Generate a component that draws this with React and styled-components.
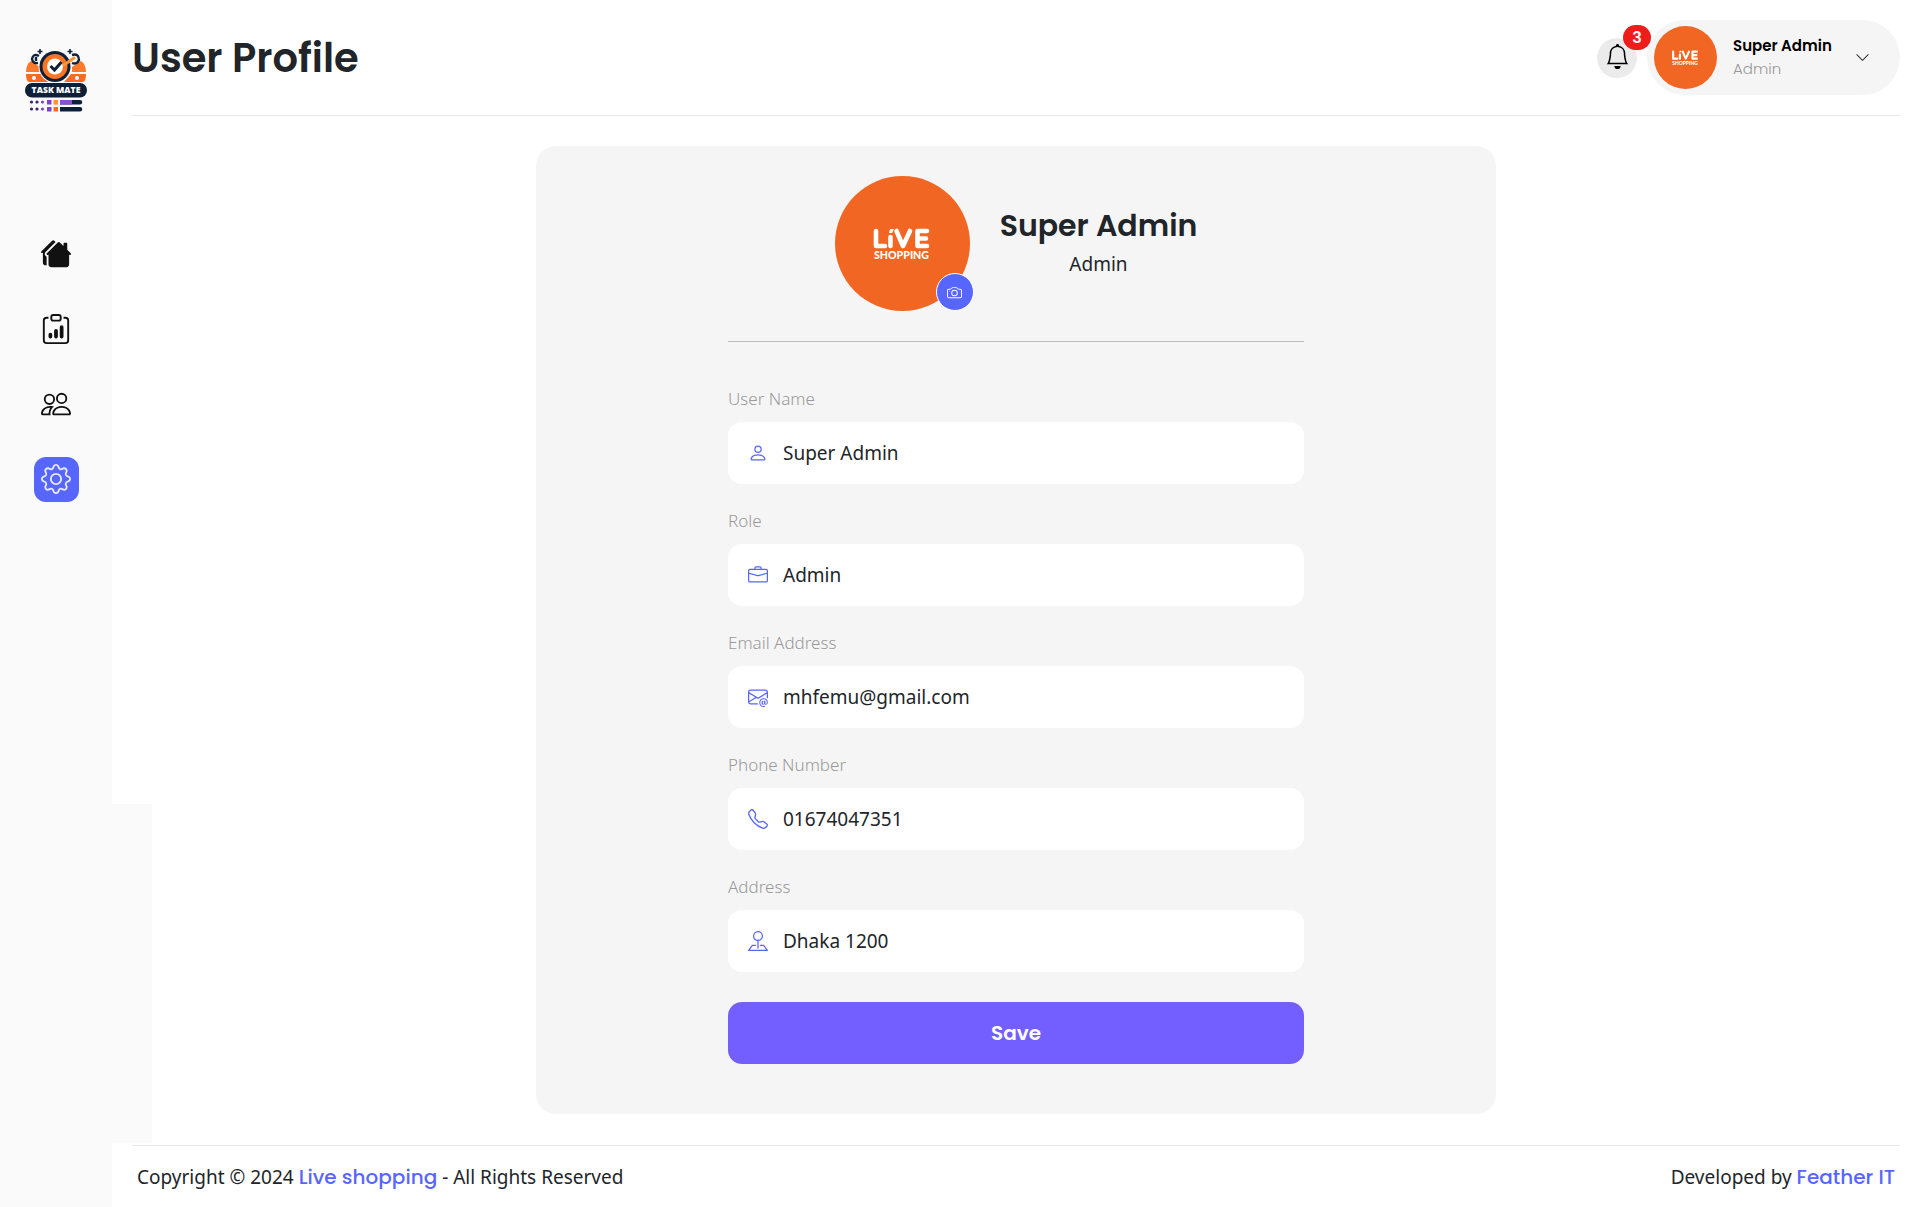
import React from 'react';
import styled, { createGlobalStyle } from 'styled-components';
import {
  BsHousesFill, BsClipboardData, BsPeople, BsGear, BsBell, BsChevronDown,
  BsCamera, BsPerson, BsBriefcase, BsEnvelopeAt, BsTelephone, BsPinMap,
} from 'react-icons/bs';

const display = "Poppins, Inter, 'Open Sans', sans-serif";
const body = "'Segoe UI', 'Noto Sans', 'Open Sans', sans-serif";

const GlobalStyle = createGlobalStyle`
  *, *::before, *::after { box-sizing: border-box; }
  body { margin: 0; background: #fff; color: #212529; font: 400 19px/30px ${body}; }
  h1, h2, p { margin: 0; }
  button, input { font: inherit; color: inherit; }
  button { cursor: pointer; border: 0; padding: 0; }
  a { color: #5766ff; text-decoration: none; }
  svg { display: block; }
`;

const Shell = styled.div`
  display: grid;
  grid-template-columns: 112px minmax(0, 1fr);
  min-height: 100vh;
`;

const Sidebar = styled.aside`
  display: flex;
  flex-direction: column;
  align-items: center;
  gap: 118px;
  padding-top: 48px;
  background: #fafafa;
`;

const Nav = styled.nav`
  display: flex;
  flex-direction: column;
  gap: 30px;
`;

const NavLink = styled.a`
  display: grid;
  place-items: center;
  width: 45px;
  height: 45px;
  border-radius: 12px;
  font-size: 30px;
  color: ${(p) => (p.$active ? '#e6e8ff' : '#111')};
  background: ${(p) => (p.$active ? '#5766ff' : 'transparent')};
  & > svg { margin-bottom: 2px; }
`;

const Page = styled.div`
  position: relative;
  display: flex;
  flex-direction: column;
`;

const SideShelf = styled.div`
  position: absolute;
  left: 0;
  top: 66.6%;
  bottom: 64px;
  width: 40px;
  background: #fafafa;
`;

const Header = styled.header`
  display: flex;
  justify-content: space-between;
  align-items: center;
  margin: 0 20px;
  height: 116px;
  border-bottom: 1px solid #e9e9e9;
`;

const Title = styled.h1`
  font: 600 40px/48px ${display};
`;

const HeaderTools = styled.div`
  display: flex;
  align-items: center;
  gap: 10px;
`;

const BellButton = styled.button`
  position: relative;
  display: grid;
  place-items: center;
  width: 40px;
  height: 40px;
  border-radius: 50%;
  background: #ebebeb;
  font-size: 25px;
  color: #000;
  & > svg { margin-bottom: 2px; }
`;

const Badge = styled.span`
  position: absolute;
  left: 26px;
  top: -13px;
  width: 28px;
  height: 25px;
  border-radius: 13px;
  background: #ef1c1c;
  color: #fff;
  font: 600 16px/25px ${display};
`;

const AccountButton = styled.button`
  display: flex;
  align-items: center;
  gap: 16px;
  width: 253px;
  height: 75px;
  padding: 0 30px 0 7px;
  border-radius: 38px;
  background: #f5f5f5;
  text-align: left;
`;

const Chevron = styled(BsChevronDown)`
  margin-left: auto;
  font-size: 15px;
`;

const AccountText = styled.span`
  display: flex;
  flex-direction: column;
  padding-bottom: 2px;
  font: 300 15px/23px ${display};
  color: #999;
`;

const AccountName = styled.strong`
  font: 600 15px/23px ${display};
  color: #000;
`;

const Main = styled.main`
  flex: 1;
  display: flex;
  justify-content: center;
  align-items: flex-start;
  padding: 30px 20px;
`;

const Card = styled.section`
  width: 100%;
  max-width: 960px;
  padding: 30px 30px 50px;
  border-radius: 20px;
  background: #f5f5f5;
`;

const Inner = styled.div`
  width: 64%;
  margin: 0 auto;
`;

const Identity = styled.div`
  display: flex;
  justify-content: center;
  gap: 30px;
  padding-bottom: 30px;
  border-bottom: 1px solid #bbb;
`;

const AvatarBox = styled.div`
  position: relative;
`;

const CameraButton = styled.button`
  position: absolute;
  right: -4px;
  bottom: 0;
  display: grid;
  place-items: center;
  width: 38px;
  height: 38px;
  border: 1px solid #fff;
  border-radius: 50%;
  background: #5766ff;
  color: #fff;
  font-size: 15px;
`;

const IdentityText = styled.div`
  display: flex;
  flex-direction: column;
  gap: 4px;
  padding-top: 31px;
  text-align: center;
`;

const Name = styled.h2`
  font: 600 30px/38px ${display};
`;

const Form = styled.form`
  display: flex;
  flex-direction: column;
  gap: 22px;
  padding-top: 42px;
`;

const Field = styled.div`
  display: flex;
  flex-direction: column;
  gap: 8px;
`;

const Label = styled.label`
  font-size: 17px;
  font-weight: 300;
  color: #999;
`;

const InputBox = styled.div`
  display: flex;
  align-items: center;
  gap: 15px;
  height: 62px;
  padding: 0 20px;
  border-radius: 14px;
  background: #fff;
  & > svg { color: #5766ff; font-size: 20px; }
`;

const Input = styled.input`
  flex: 1;
  min-width: 0;
  padding: 0;
  border: 0;
  outline: 0;
  background: transparent;
`;

const SaveButton = styled.button`
  height: 62px;
  margin-top: 8px;
  border-radius: 14px;
  background: #735fff;
  color: #fff;
  font: 600 20px/30px ${display};
`;

const Footer = styled.footer`
  display: flex;
  justify-content: space-between;
  align-items: center;
  height: 62px;
  margin: 0 20px;
  padding: 0 5px;
  border-top: 1px solid #e9e9e9;
  a { font: 500 20px/30px ${display}; }
`;

function Avatar({ size }) {
  return (
    <svg width={size} height={size} viewBox="0 0 135 135" role="img" aria-label="Live Shopping">
      <circle cx="67.500" cy="67.500" r="67.500" fill="#f16622" />
      <g fill="none" stroke="#fff" strokeWidth="4.600" strokeLinecap="round" strokeLinejoin="round">
        <path d="M41 55v15h9M55.500 61v9M61.500 55l6.500 15L75 55M92 55h-9.500v15H92M82.500 62.500H91" />
      </g>
      <path d="M54 57l1-4h4l-2 4z" fill="#fff" />
      <text x="66.500" y="83" textAnchor="middle" fill="#fff" fontFamily="Lato, sans-serif" fontWeight="900" fontSize="10.600">SHOPPING</text>
    </svg>
  );
}

function Logo() {
  const navy = '#0e2038';
  return (
    <svg width="64" height="66" viewBox="0 0 64 66" role="img" aria-label="Task Mate">
      <path d="M7 13q-5 3-5 11h14V19zM57 13q5 3 5 11H48V19z" fill="#ff7a2b" />
      <path d="M2 26h15l7 8H5q-3-1-3-8zM62 26H47l-7 8h19q3-1 3-8z" fill="#ff6a1f" />
      <circle cx="10" cy="30" r="2" fill="#fff" /><circle cx="53" cy="30" r="2" fill="#fff" />
      <path d="M16 1v5M13.500 3.500h5M46 1v5M43.500 3.500h5" stroke={navy} strokeWidth="1.600" />
      <path d="M15 8q-6-3-7 3 1 5 6 4M48 7q7-2 7 5-2 5-7 3M12 9v4" fill="none" stroke={navy} strokeWidth="2.400" />
      <circle cx="31" cy="18.500" r="16.500" fill="#fafafa" />
      <circle cx="31" cy="18.500" r="15.500" fill={navy} />
      <circle cx="31" cy="18.500" r="12.500" fill="#ff7420" />
      <circle cx="31" cy="18.500" r="8" fill="#fff" />
      <path d="M40 17l10-7" stroke="#ff9233" strokeWidth="3" strokeLinecap="round" />
      <path d="M26.500 18l4 4 7-8" fill="none" stroke={navy} strokeWidth="3" />
      <rect x="1" y="35" width="62" height="14.500" rx="7" fill={navy} />
      <text x="32" y="45" textAnchor="middle" fill="#fff" fontFamily="'Open Sans', sans-serif" fontWeight="800" fontSize="8.600">TASK MATE</text>
      <g fill="#3b2369">
        <circle cx="7.500" cy="54" r="1.600" /><circle cx="13" cy="54" r="1.600" />
        <circle cx="7.500" cy="61" r="1.600" /><circle cx="13" cy="61" r="1.600" />
      </g>
      <g fill="#7b45cf">
        <circle cx="18.500" cy="54" r="1.600" /><circle cx="18.500" cy="61" r="1.600" />
        <rect x="23" y="52" width="4.500" height="4.500" /><rect x="23" y="59" width="4.500" height="4.500" />
      </g>
      <rect x="29.500" y="52" width="4.500" height="4.500" fill="#ff9233" />
      <rect x="29.500" y="59" width="4.500" height="4.500" fill="#ff6a1f" />
      <path d="M36 52h20a2.200 2.200 0 0 1 0 4.500H36zM36 59h20a2.200 2.200 0 0 1 0 4.500H36z" fill={navy} />
      <path d="M36 52h12v4.500H36z" fill="#8450dc" />
    </svg>
  );
}

const navItems = [
  { label: 'Home', Icon: BsHousesFill },
  { label: 'Reports', Icon: BsClipboardData },
  { label: 'Team', Icon: BsPeople },
  { label: 'Settings', Icon: BsGear, active: true },
];

const fields = [
  { id: 'name', label: 'User Name', value: 'Super Admin', Icon: BsPerson },
  { id: 'role', label: 'Role', value: 'Admin', Icon: BsBriefcase },
  { id: 'email', label: 'Email Address', value: 'mhfemu@gmail.com', type: 'email', Icon: BsEnvelopeAt },
  { id: 'phone', label: 'Phone Number', value: '01674047351', type: 'tel', Icon: BsTelephone },
  { id: 'address', label: 'Address', value: 'Dhaka 1200', Icon: BsPinMap },
];

export default function App() {
  return (
    <>
      <GlobalStyle />
      <Shell>
        <Sidebar>
          <Logo />
          <Nav>
            {navItems.map(({ label, Icon, active }) => (
              <NavLink key={label} href="#" aria-label={label} $active={active}><Icon /></NavLink>
            ))}
          </Nav>
        </Sidebar>
        <Page>
          <SideShelf />
          <Header>
            <Title>User Profile</Title>
            <HeaderTools>
              <BellButton aria-label="Notifications"><BsBell /><Badge>3</Badge></BellButton>
              <AccountButton>
                <Avatar size={63} />
                <AccountText><AccountName>Super Admin</AccountName>Admin</AccountText>
                <Chevron />
              </AccountButton>
            </HeaderTools>
          </Header>
          <Main>
            <Card>
              <Inner>
                <Identity>
                  <AvatarBox>
                    <Avatar size={135} />
                    <CameraButton aria-label="Change photo"><BsCamera /></CameraButton>
                  </AvatarBox>
                  <IdentityText><Name>Super Admin</Name><p>Admin</p></IdentityText>
                </Identity>
                <Form onSubmit={(e) => e.preventDefault()}>
                  {fields.map(({ id, label, value, type = 'text', Icon }) => (
                    <Field key={id}>
                      <Label htmlFor={id}>{label}</Label>
                      <InputBox><Icon /><Input id={id} type={type} defaultValue={value} /></InputBox>
                    </Field>
                  ))}
                  <SaveButton type="submit">Save</SaveButton>
                </Form>
              </Inner>
            </Card>
          </Main>
          <Footer>
            <p>Copyright © 2024 <a href="#">Live shopping</a> - All Rights Reserved</p>
            <p>Developed by <a href="#">Feather IT</a></p>
          </Footer>
        </Page>
      </Shell>
    </>
  );
}
